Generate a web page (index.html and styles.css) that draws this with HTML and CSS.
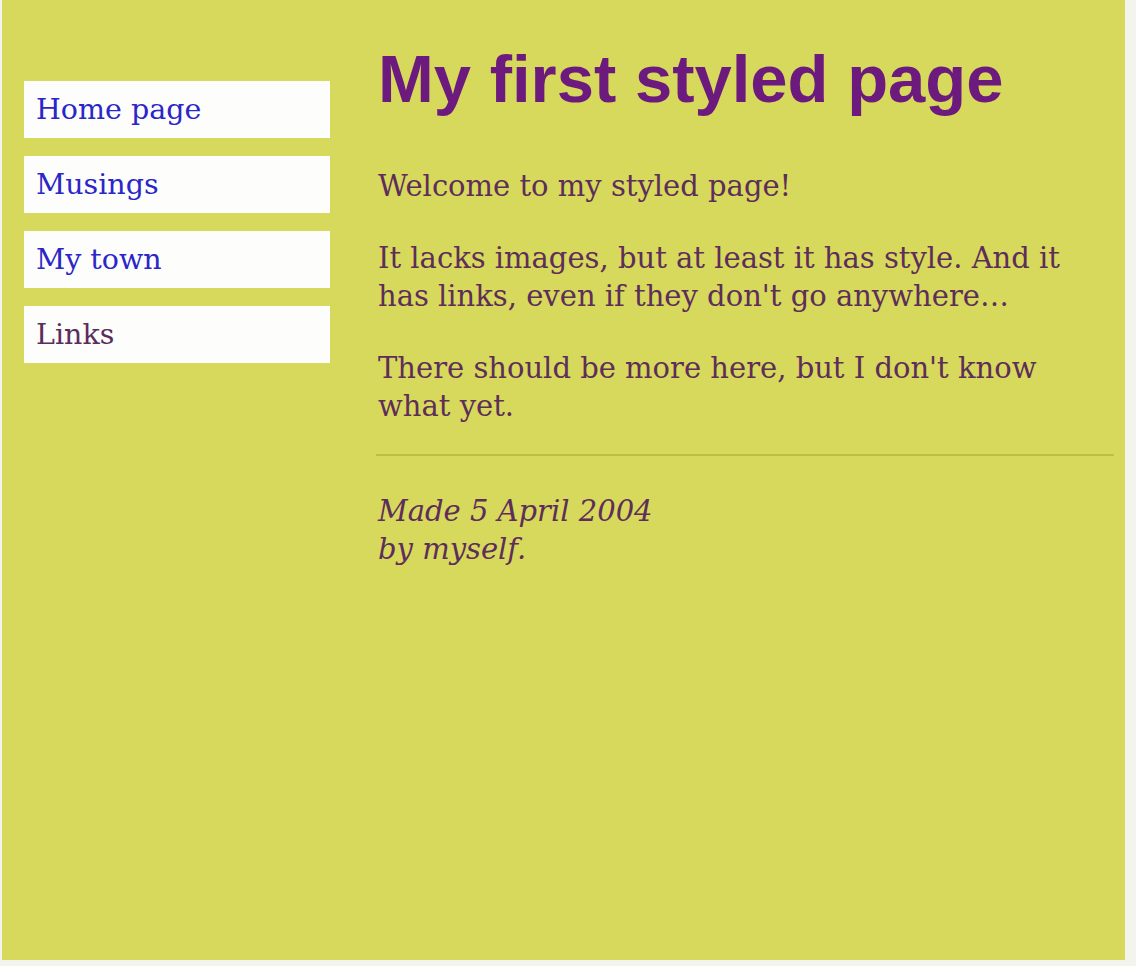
FILE: index.html
```html
<!DOCTYPE html>
<html>
<head>
<meta charset="utf-8">
<title>My first styled page</title>
<link rel="stylesheet" href="styles.css">
</head>
<body>
<div class="frame">
  <ul class="navbar">
    <li><a class="link" href="#">Home page</a></li>
    <li><a class="link" href="#">Musings</a></li>
    <li><a class="link" href="#">My town</a></li>
    <li><a class="link visited" href="#">Links</a></li>
  </ul>
  <main class="content">
    <h1 class="title">My first styled page</h1>
    <p class="para">Welcome to my styled page!</p>
    <p class="para">It lacks images, but at least it has style. And it has links, even if they don't go anywhere…</p>
    <p class="para">There should be more here, but I don't know what yet.</p>
    <hr class="rule">
    <address class="footer">Made 5 April 2004<br>by myself.</address>
  </main>
</div>
</body>
</html>
```
FILE: styles.css
```css
html, body {
  margin: 0;
  padding: 0;
  background: #f4f4ee;
}
.frame {
  width: 1123px;
  height: 960px;
  margin-left: 2px;
  background: #d6d95b;
  display: flex;
  align-items: flex-start;
  font-family: "DejaVu Serif", "Liberation Serif", serif;
  color: #5e2d5a;
}
.navbar {
  list-style: none;
  margin: 81px 0 0 22px;
  padding: 0;
  width: 306px;
  display: flex;
  flex-direction: column;
  gap: 18px;
}
.navbar li {
  background: #fdfdfc;
  height: 57px;
  display: flex;
  align-items: center;
  padding-left: 12px;
}
.link {
  font-size: 28.5px;
  color: #2b26c8;
  text-decoration: none;
}
.link.visited {
  color: #5a2d5c;
}
.content {
  margin-left: 48px;
  width: 736px;
}
.title {
  font-family: "Liberation Sans", Arial, sans-serif;
  font-weight: bold;
  font-size: 67px;
  line-height: 80px;
  color: #6c1a7e;
  margin: 39px 0 0 0;
}
.para {
  font-size: 29px;
  line-height: 38px;
  margin: 34px 0 0 0;
  max-width: 700px;
}
.para:first-of-type {
  margin-top: 48px;
}
.rule {
  border: 0;
  border-top: 2px solid #bcbf44;
  margin: 29px 0 0 -2px;
}
.footer {
  font-style: italic;
  font-size: 29px;
  line-height: 38px;
  margin-top: 36px;
}
```
